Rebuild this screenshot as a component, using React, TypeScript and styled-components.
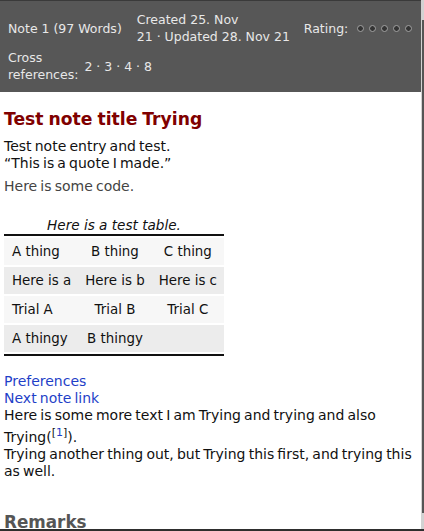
import styled, { createGlobalStyle } from 'styled-components';

const GlobalStyle = createGlobalStyle`
  html, body {
    margin: 0;
    padding: 0;
    background: #fff;
  }
  body {
    font-family: "DejaVu Sans", "Noto Sans", sans-serif;
    color: #111;
  }
`;

const rows = [
  ['A thing', 'B thing', 'C thing'],
  ['Here is a', 'Here is b', 'Here is c'],
  ['Trial A', 'Trial B', 'Trial C'],
  ['A thingy', 'B thingy', ''],
];

function App() {
  return (
    <>
      <GlobalStyle />
      <Page>
        <Header>
          <MetaRow>
            <MetaItem $spaced>Note 1 (97 Words)</MetaItem>
            <MetaItem $width="156px" $wrap>
              Created 25. Nov 21{'\u00a0·\u00a0'}Updated 28. Nov 21
            </MetaItem>
            <MetaItem>
              Rating:
              <Stars>
                {[0, 1, 2, 3, 4].map((i) => (
                  <Star key={i} />
                ))}
              </Stars>
            </MetaItem>
          </MetaRow>
          <MetaRow>
            <MetaItem>
              <MetaLabel>Cross references:</MetaLabel>
              <span>2 · 3 · 4 · 8</span>
            </MetaItem>
          </MetaRow>
        </Header>

        <Content>
          <Title>Test note title Trying</Title>
          <Para>
            Test note entry and test.
            <br />
            “This is a quote I made.”
          </Para>
          <Code>Here is some code.</Code>

          <Table>
            <Caption>Here is a test table.</Caption>
            <tbody>
              {rows.map((row, index) => (
                <Row key={index} $odd={index % 2 === 0}>
                  {row.map((cell, j) => (
                    <Cell key={j}>{cell}</Cell>
                  ))}
                </Row>
              ))}
            </tbody>
          </Table>

          <TextBlock>
            <Link href="#">Preferences</Link>
            <br />
            <Link href="#">Next note link</Link>
            <br />
            Here is some more text I am Trying and trying and also Trying(
            <sup>
              [<Link href="#">1</Link>]
            </sup>
            ).
            <br />
            Trying another thing out, but Trying this first, and trying this as well.
          </TextBlock>

          <Remarks>Remarks</Remarks>
        </Content>

        <ScrollTrack>
          <ScrollThumb />
        </ScrollTrack>
      </Page>
    </>
  );
}

export default App;

const Page = styled.div`
  position: relative;
  height: 531px;
  overflow: hidden;
  box-sizing: border-box;
  border-bottom: 2px solid #2e2e2e;
`;

const Header = styled.div`
  display: flex;
  flex-direction: column;
  gap: 4px;
  padding: 10px 12px 9px 8px;
  background: #575757;
  border-top: 1px solid #3a3a3a;
  color: #e8e8e8;
  font-size: 12.5px;
  line-height: 17px;
`;

const MetaRow = styled.div`
  display: flex;
  align-items: center;
  gap: 11px;
`;

const MetaItem = styled.div<{ $width?: string; $wrap?: boolean; $spaced?: boolean }>`
  display: ${(props) => (props.$wrap ? 'block' : 'flex')};
  align-items: center;
  gap: 6px;
  flex-shrink: 0;
  width: ${(props) => props.$width || 'auto'};
  margin-right: ${(props) => (props.$spaced ? '4px' : '0')};
  white-space: ${(props) => (props.$wrap ? 'normal' : 'nowrap')};
`;

const MetaLabel = styled.span`
  width: min-content;
  white-space: normal;
`;

const Stars = styled.span`
  display: flex;
  gap: 5px;
  margin-left: 3px;
`;

const Star = styled.span`
  width: 7px;
  height: 7px;
  box-sizing: border-box;
  border-radius: 50%;
  border: 1.5px solid #a2a2a2;
  background: #343434;
`;

const Content = styled.div`
  padding: 0 8px 0 4px;
  font-size: 14px;
  line-height: 17px;
  word-spacing: -1.3px;
`;

const Title = styled.h1`
  margin: 17px 0 9px;
  font-size: 17.2px;
  line-height: 20px;
  font-weight: bold;
  word-spacing: -1px;
  color: #800000;
`;

const Para = styled.p`
  margin: 0;
`;

const Code = styled.p`
  margin: 6px 0 0;
  color: #444;
`;

const Table = styled.table`
  margin-top: 22px;
  border-collapse: separate;
  border-spacing: 0 2px;
  border-top: 2px solid #111;
  border-bottom: 2px solid #111;
  font-size: 13.4px;
  word-spacing: 0;
`;

const Caption = styled.caption`
  font-style: italic;
  font-size: 13.6px;
  line-height: 17px;
`;

const Row = styled.tr<{ $odd: boolean }>`
  background: ${(props) => (props.$odd ? '#f7f7f7' : '#ececec')};
`;

const Cell = styled.td`
  height: 27px;
  padding: 0 7px;
  text-align: center;
  vertical-align: middle;
  white-space: nowrap;
  &:first-child {
    text-align: left;
    padding-left: 8px;
  }
`;

const TextBlock = styled.p`
  margin: 17px 0 0;
  & sup {
    font-size: 11px;
    vertical-align: 6px;
  }
`;

const Link = styled.a`
  color: #1f3fc8;
  text-decoration: none;
`;

const Remarks = styled.h2`
  margin: 32px 0 0;
  font-size: 16.8px;
  line-height: 20px;
  font-weight: bold;
  color: #555;
`;

const ScrollTrack = styled.div`
  position: absolute;
  top: 0;
  right: 0;
  bottom: 0;
  width: 3px;
  background: #d2d2d2;
`;

const ScrollThumb = styled.div`
  position: absolute;
  top: 20px;
  right: 0;
  width: 2px;
  height: 493px;
  background: #555;
`;
